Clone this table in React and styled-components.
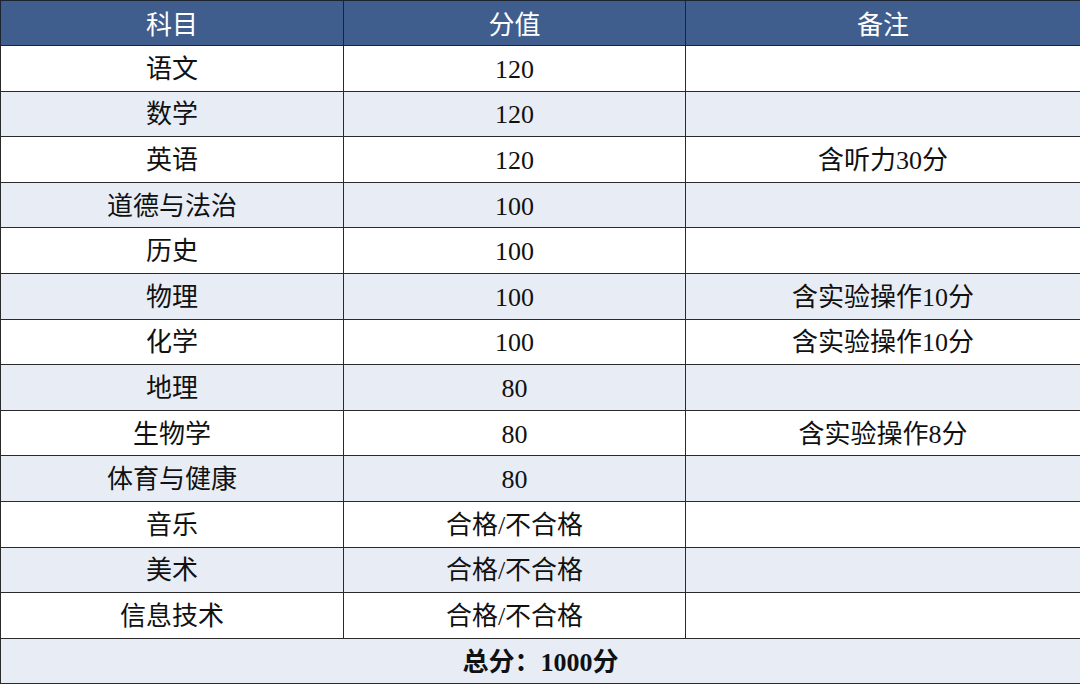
import React from 'react';
import styled, { createGlobalStyle } from 'styled-components';

const GlobalStyle = createGlobalStyle`
  html, body {
    margin: 0;
    padding: 0;
    background: #fff;
  }
`;

const Table = styled.table`
  width: 1080px;
  border-collapse: collapse;
  table-layout: fixed;
  font-family: "Liberation Serif", "Noto Sans CJK SC", serif;
  font-size: 26px;
  color: #111;
`;

const HeadCell = styled.th`
  height: 39px;
  padding: 5px 0 0;
  background: #3f5d8d;
  color: #fff;
  font-weight: normal;
  border: 1.5px solid #1c2430;
  text-align: center;
  line-height: 1;
`;

const Row = styled.tr`
  height: 45.6px;
  background: ${p => (p.$shaded ? '#e8edf5' : '#fff')};
`;

const Cell = styled.td`
  padding: 3px 0 0;
  border: 1.5px solid #2a2a2a;
  text-align: center;
  vertical-align: middle;
  line-height: 1;
`;

const TotalCell = styled(Cell)`
  font-weight: bold;
  background: #e8edf5;
`;

const rows = [
  ['语文', '120', ''],
  ['数学', '120', ''],
  ['英语', '120', '含听力30分'],
  ['道德与法治', '100', ''],
  ['历史', '100', ''],
  ['物理', '100', '含实验操作10分'],
  ['化学', '100', '含实验操作10分'],
  ['地理', '80', ''],
  ['生物学', '80', '含实验操作8分'],
  ['体育与健康', '80', ''],
  ['音乐', '合格/不合格', ''],
  ['美术', '合格/不合格', ''],
  ['信息技术', '合格/不合格', ''],
];

export default function App() {
  return (
    <>
      <GlobalStyle />
      <Table>
        <colgroup>
          <col style={{ width: 343 }} />
          <col style={{ width: 342 }} />
          <col style={{ width: 395 }} />
        </colgroup>
        <thead>
          <tr>
            <HeadCell>科目</HeadCell>
            <HeadCell>分值</HeadCell>
            <HeadCell>备注</HeadCell>
          </tr>
        </thead>
        <tbody>
          {rows.map((r, i) => (
            <Row key={r[0]} $shaded={i % 2 === 1}>
              <Cell>{r[0]}</Cell>
              <Cell>{r[1]}</Cell>
              <Cell>{r[2]}</Cell>
            </Row>
          ))}
          <Row $shaded>
            <TotalCell colSpan={3}>总分：1000分</TotalCell>
          </Row>
        </tbody>
      </Table>
    </>
  );
}
